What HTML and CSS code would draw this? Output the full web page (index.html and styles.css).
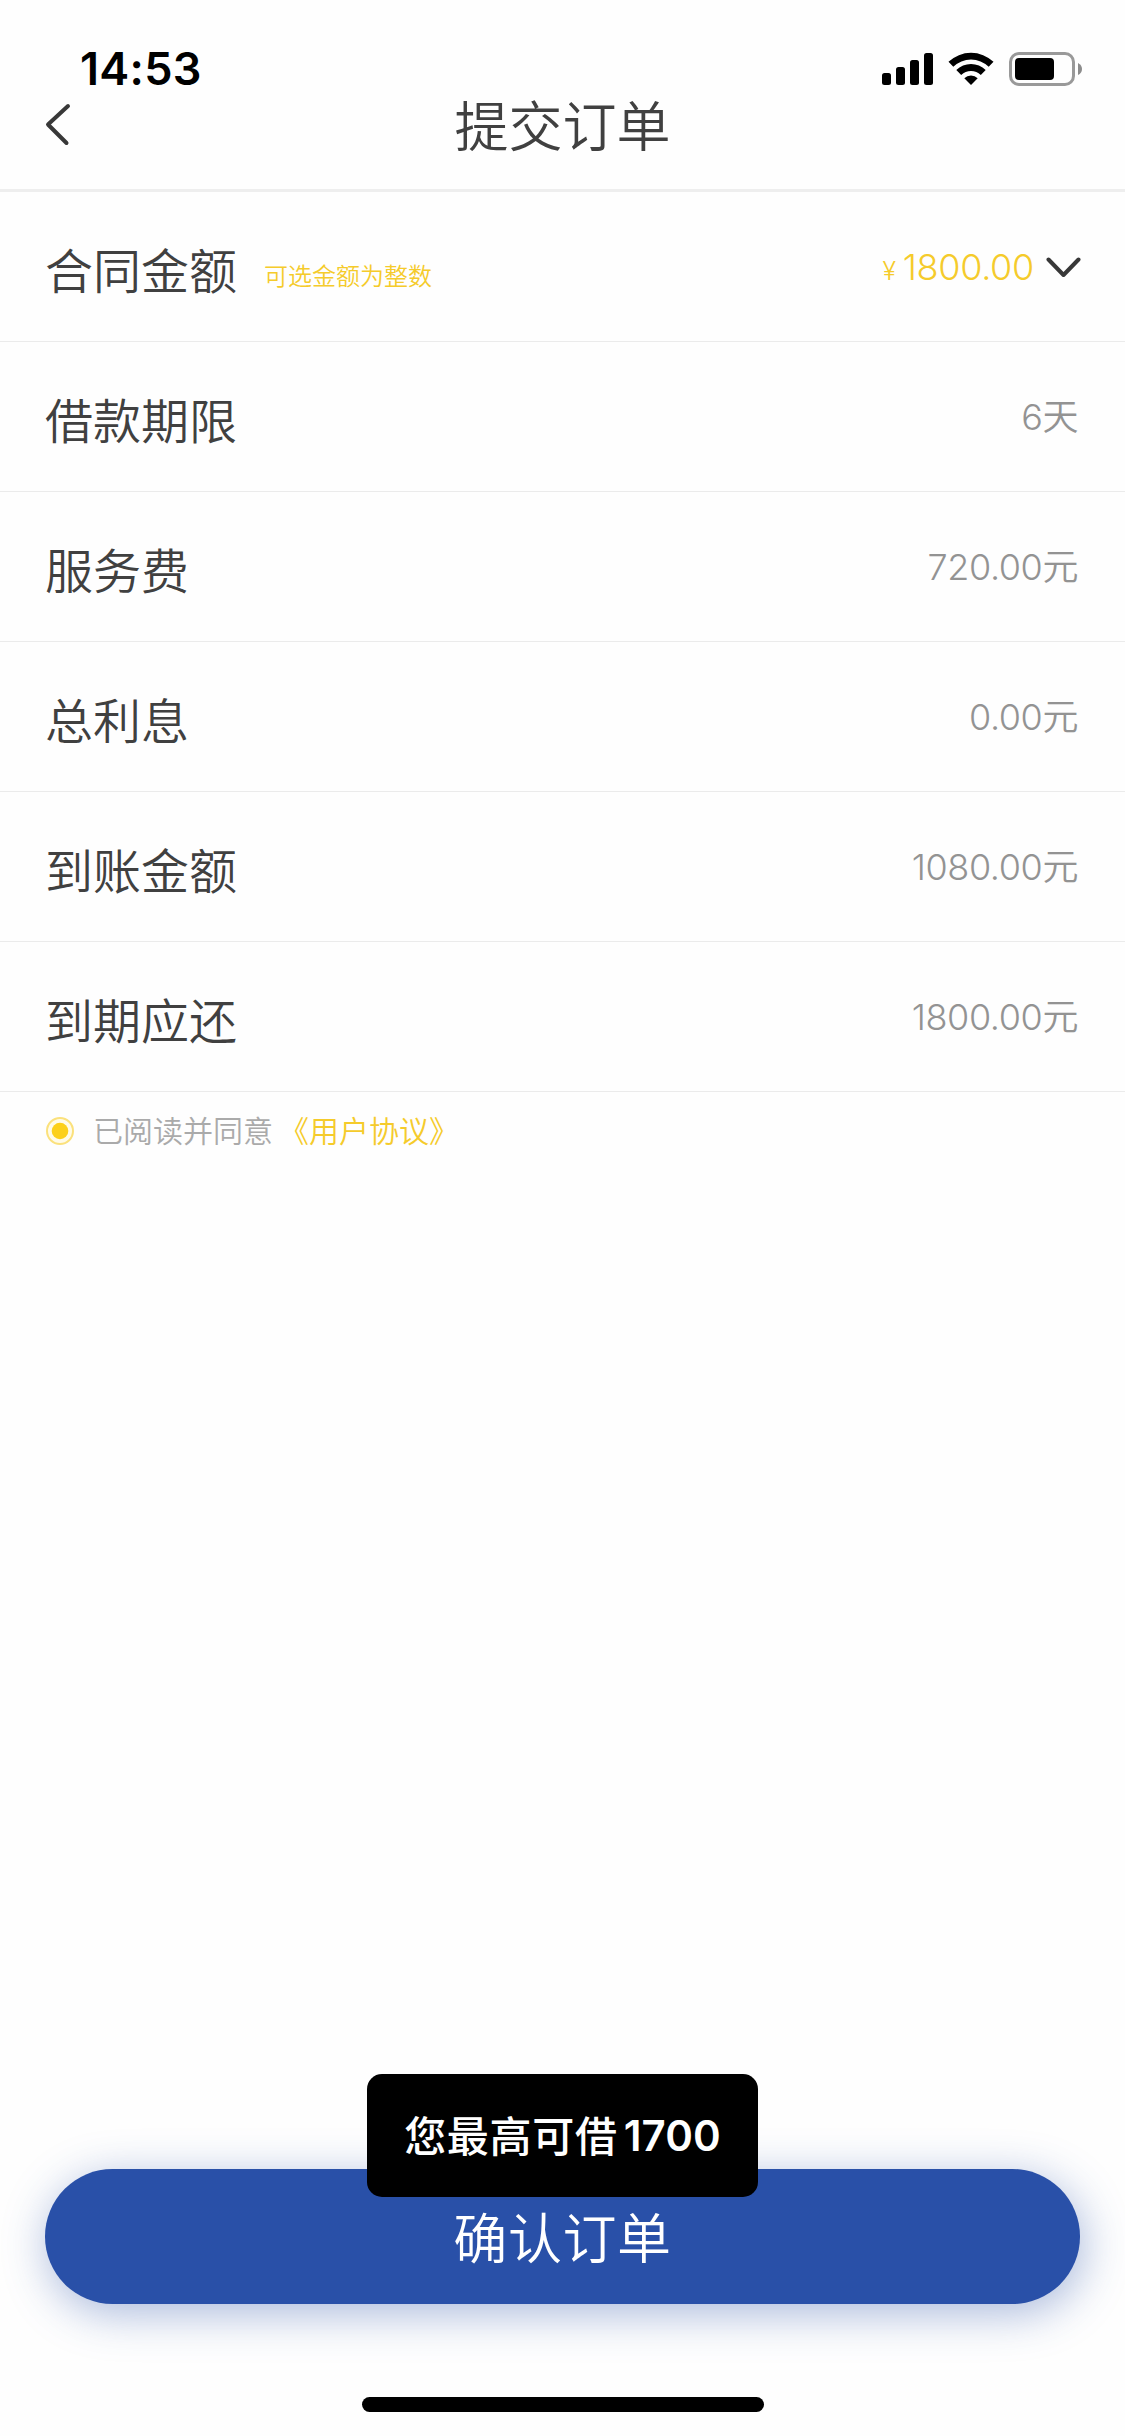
FILE: index.html
```html
<!DOCTYPE html>
<html lang="zh-CN">
<head>
<meta charset="utf-8">
<title>提交订单</title>
<link rel="stylesheet" href="styles.css">
</head>
<body>
<div class="screen">
  <header class="header">
    <div class="status">
      <span class="time">14:53</span>
      <svg class="status-icons" width="202" height="36" viewBox="881 51 202 36" aria-hidden="true">
        <rect x="882" y="73" width="9" height="12" rx="2.5"/>
        <rect x="896" y="67" width="9" height="18" rx="2.5"/>
        <rect x="910" y="60" width="9" height="25" rx="2.5"/>
        <rect x="924" y="53" width="9" height="32" rx="2.5"/>
        <path d="M948.5 61.8 A32.6 32.6 0 0 1 993.500 61.800 L988.700 66.700 A25.500 25.500 0 0 0 953.300 66.700 Z"/>
        <path d="M956.300 70 A21 21 0 0 1 985.700 70 L980.800 75 A14.200 14.200 0 0 0 961.200 75 Z"/>
        <path d="M964.300 78.300 A9.700 9.700 0 0 1 977.700 78.300 L971 85 Z"/>
        <rect class="battery-shell" x="1010.500" y="53.500" width="63" height="31" rx="8.500"/>
        <rect x="1015" y="58" width="39" height="22" rx="4"/>
        <path class="battery-cap" d="M1078 63 Q1082 65 1082 69 T1078 75 Z"/>
      </svg>
    </div>
    <div class="nav">
      <svg class="back" width="26" height="43" viewBox="0 0 26 43" aria-hidden="true"><path d="M23 3 L3 21.500 L21.500 40"/></svg>
      <h1 class="title">提交订单</h1>
    </div>
  </header>
  <main class="content">
    <div class="row">
      <span class="label">合同金额</span><span class="hint">可选金额为整数</span>
      <span class="amount"><span class="yen">¥</span>1800.00</span>
      <svg class="down" width="35" height="22" viewBox="0 0 35 22" aria-hidden="true"><path d="M2.500 2.500 L17.500 18 L32.500 2.500"/></svg>
    </div>
    <div class="row"><span class="label">借款期限</span><span class="value">6天</span></div>
    <div class="row"><span class="label">服务费</span><span class="value">720.00元</span></div>
    <div class="row"><span class="label">总利息</span><span class="value">0.00元</span></div>
    <div class="row"><span class="label">到账金额</span><span class="value">1080.00元</span></div>
    <div class="row"><span class="label">到期应还</span><span class="value">1800.00元</span></div>
    <div class="agree">
      <svg class="radio" width="30" height="30" viewBox="0 0 30 30" aria-hidden="true"><circle class="ring" cx="15" cy="15" r="13"/><circle class="dot" cx="15" cy="15" r="8.300"/></svg>
      <span class="agree-text">已阅读并同意</span><span class="agree-link">《用户协议》</span>
    </div>
  </main>
  <footer class="footer">
    <div class="submit">确认订单<div class="toast"><span class="toast-text">您最高可借</span><span class="limit">1700</span></div></div>
    <div class="home"></div>
  </footer>
</div>
</body>
</html>
```

FILE: styles.css
```css
* { box-sizing: border-box; }
body {
  margin: 0;
  background: #fefefe;
  color: #404040;
  font-family: Inter, "Noto Sans CJK SC", sans-serif;
  font-weight: 350;
}
.screen { width: 1125px; height: 2436px; display: flex; flex-direction: column; overflow: hidden; }
svg { display: block; flex: none; }

.header { height: 192px; border-bottom: 3px solid #eee; }
.status { height: 95px; padding: 43px 42px 0 80px; display: flex; align-items: center; justify-content: space-between; }
.time { font-size: 45px; line-height: 52px; font-weight: 600; color: #000; letter-spacing: 0.3px; }
.battery-shell { fill: none; stroke: #999; stroke-width: 3; }
.battery-cap { fill: #8c8c8c; }
.nav { height: 59px; padding: 0 45px; display: grid; grid-template-columns: 1fr auto 1fr; align-items: center; }
.back { align-self: start; margin-top: 8px; }
.back path, .down path { fill: none; stroke: #383838; stroke-width: 4; stroke-linecap: round; stroke-linejoin: round; }
.title { margin: 0; padding-top: 3px; font-size: 54px; line-height: 59px; font-weight: 350; }

.content { flex: 1; }
.row { height: 150px; padding: 0 45px; display: flex; align-items: center; border-bottom: 1px solid #ebebeb; }
.label { font-size: 48px; line-height: 60px; padding-top: 10px; }
.hint { margin-left: 27px; padding-top: 21px; font-size: 24px; line-height: 30px; color: #f5cb2b; }
.value, .amount { margin-left: auto; font-size: 36px; line-height: 44px; }
.value { padding-top: 1px; margin-right: 2px; letter-spacing: -0.4px; color: #939393; }
.amount { padding-top: 5px; letter-spacing: -0.3px; color: #f5cb2b; }
.yen { font-size: 25px; margin-right: 7px; }
.down { margin: 2px -1px 0 12px; }

.agree { height: 78px; padding: 0 45px; display: flex; align-items: center; font-size: 30px; line-height: 40px; }
.ring { fill: #fffbe8; stroke: #fbe17c; stroke-width: 2; }
.dot { fill: #fcd01b; }
.agree-text { margin-left: 18px; color: #aaa; }
.agree-link { margin-left: 6px; color: #f5cb2b; }

.footer { height: 267px; padding: 0 45px 24px; display: flex; flex-direction: column; justify-content: space-between; align-items: center; }
.submit {
  position: relative;
  width: 100%;
  height: 135px;
  padding-bottom: 2px;
  border-radius: 68px;
  display: flex;
  align-items: center;
  justify-content: center;
  background: #2950a8;
  box-shadow: 3px 9px 45px rgba(41, 80, 168, 0.4);
  color: #fff;
  font-size: 54px;
  letter-spacing: 0.6px;
}
.toast {
  position: absolute;
  left: 322px;
  top: -95px;
  width: 391px;
  height: 123px;
  border-radius: 15px;
  display: flex;
  align-items: center;
  justify-content: center;
  gap: 6px;
  background: #000;
  font-size: 42px;
  font-weight: 500;
  letter-spacing: 0.7px;
}
.toast-text { padding-bottom: 5px; }
.limit { font-weight: 600; letter-spacing: 0.1px; }
.home { width: 402px; height: 15px; border-radius: 8px; background: #000; }
```
